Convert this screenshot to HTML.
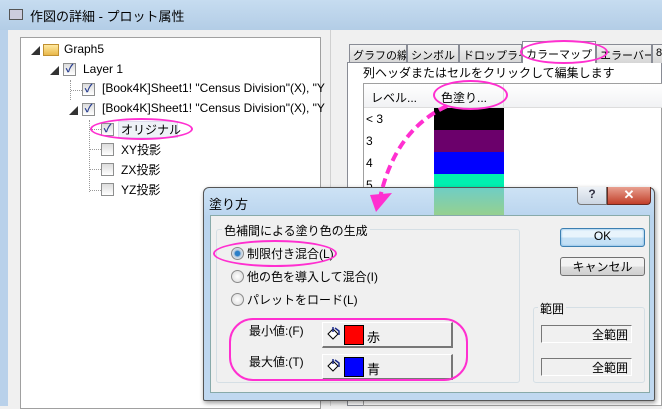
<!DOCTYPE html>
<html><head><meta charset="utf-8"><style>
*{box-sizing:border-box;margin:0;padding:0}
body{width:662px;height:406px;overflow:hidden;position:relative;background:#f0f0f0;font-family:"Liberation Sans","Noto Sans CJK JP",sans-serif;font-size:12px;color:#000}
.a{position:absolute}
.cb{position:absolute;width:13px;height:13px;border:1px solid #8e8f8f;background:linear-gradient(#dcdcdc,#fff)}
.ck{color:#2a3f8f;font-size:11px;line-height:11px;text-align:center;font-weight:bold}
.btn{position:absolute;border:1px solid #707070;border-radius:3px;background:linear-gradient(#f2f2f2 50%,#dddddd 50%,#cfcfcf);text-align:center}
.rad{position:absolute;width:13px;height:13px;border-radius:50%;border:1px solid #8a8a8a;background:radial-gradient(#fff,#d8d8d8)}
.pk{position:absolute;border:2px solid #ff2fd0;border-radius:50%}
.tab{position:absolute;top:44px;height:19px;border:1px solid #898c95;border-bottom:none;background:linear-gradient(#f2f2f2,#d6d6d6);padding:2px 3px;white-space:nowrap;font-size:11px;overflow:hidden}
</style></head><body>
<div class="a" style="left:0;top:0;width:662px;height:30px;background:linear-gradient(#c6dcf0,#b3cde6)"></div>
<div class="a" style="left:9px;top:9px;width:14px;height:11px;border:1px solid #555;background:#ccd"></div>
<div class="a" style="left:30px;top:6px;font-size:13px">作図の詳細 - プロット属性</div>
<div class="a" style="left:0;top:30px;width:8px;height:376px;background:#b9d1ea"></div>
<div class="a" style="left:8px;top:30px;width:654px;height:376px;background:#f0f0f0"></div>
<div class="a" style="left:20px;top:37px;width:301px;height:372px;background:#fff;border:1px solid #a0a0a0"></div>
<div class="a" style="left:31px;top:44px;font-size:9px;color:#333">◢</div>
<div class="a" style="left:43px;top:44px;width:16px;height:12px;background:linear-gradient(#ffe9a0,#e8b84a);border:1px solid #c09030"></div>
<div class="a" style="left:64px;top:42px">Graph5</div>
<div class="a" style="left:50px;top:64px;font-size:9px;color:#333">◢</div>
<div class="cb ck" style="left:63px;top:63px">✓</div>
<div class="a" style="left:83px;top:62px">Layer 1</div>
<div class="a" style="left:70px;top:80px;height:20px;border-left:1px dotted #999"></div>
<div class="a" style="left:71px;top:90px;width:11px;border-top:1px dotted #999"></div>
<div class="cb ck" style="left:82px;top:83px">✓</div>
<div class="a" style="left:102px;top:81px;white-space:nowrap">[Book4K]Sheet1! "Census Division"(X), "Y</div>
<div class="a" style="left:69px;top:104px;font-size:9px;color:#333">◢</div>
<div class="cb ck" style="left:82px;top:103px">✓</div>
<div class="a" style="left:102px;top:101px;white-space:nowrap">[Book4K]Sheet1! "Census Division"(X), "Y</div>
<div class="a" style="left:89px;top:120px;height:72px;border-left:1px dotted #999"></div>
<div class="a" style="left:90px;top:129px;width:11px;border-top:1px dotted #999"></div>
<div class="a" style="left:90px;top:149px;width:11px;border-top:1px dotted #999"></div>
<div class="a" style="left:90px;top:169px;width:11px;border-top:1px dotted #999"></div>
<div class="a" style="left:90px;top:190px;width:11px;border-top:1px dotted #999"></div>
<div class="cb ck" style="left:101px;top:123px">✓</div>
<div class="a" style="left:118px;top:121px;width:60px;height:17px;background:#eef2f7;border:1px solid #dde"></div>
<div class="a" style="left:121px;top:121px">オリジナル</div>
<div class="cb" style="left:101px;top:143px"></div><div class="a" style="left:121px;top:141px">XY投影</div>
<div class="cb" style="left:101px;top:163px"></div><div class="a" style="left:121px;top:161px">ZX投影</div>
<div class="cb" style="left:101px;top:183px"></div><div class="a" style="left:121px;top:181px">YZ投影</div>
<div class="pk" style="left:90px;top:118px;width:103px;height:22px"></div>
<div class="a" style="left:330px;top:30px;width:332px;height:376px;border-left:1px solid #d0d0d0"></div>
<div class="tab" style="left:349px;width:58px">グラフの線</div>
<div class="tab" style="left:407px;width:52px">シンボル</div>
<div class="tab" style="left:459px;width:63px">ドロップライン</div>
<div class="a" style="left:347px;top:62px;width:315px;height:344px;background:#fff;border:1px solid #898c95"></div>
<div class="tab" style="left:522px;top:41px;height:22px;width:74px;background:#fff;border-color:#898c95;padding-top:4px">カラーマップ</div>
<div class="tab" style="left:596px;width:56px">エラーバー</div>
<div class="tab" style="left:652px;width:12px">8</div>
<div class="a" style="left:363px;top:64px">列ヘッダまたはセルをクリックして編集します</div>
<div class="a" style="left:363px;top:83px;width:299px;height:323px;border:1px solid #a0a0a0;background:#fff"></div>
<div class="a" style="left:364px;top:84px;width:298px;height:24px;background:linear-gradient(#fff,#f1f2f4);border-bottom:1px solid #ddd"></div>
<div class="a" style="left:503px;top:84px;height:24px;border-left:1px solid #ddd"></div>
<div class="a" style="left:371px;top:89px">レベル...</div>
<div class="a" style="left:441px;top:89px">色塗り...</div>
<div class="a" style="left:434px;top:108px;width:70px;height:22px;background:#000"></div>
<div class="a" style="left:434px;top:130px;width:70px;height:22px;background:#6b006b"></div>
<div class="a" style="left:434px;top:152px;width:70px;height:22px;background:#0000ff"></div>
<div class="a" style="left:434px;top:174px;width:70px;height:22px;background:#00f0b0"></div>
<div class="a" style="left:366px;top:112px">&lt; 3</div>
<div class="a" style="left:366px;top:134px">3</div>
<div class="a" style="left:366px;top:156px">4</div>
<div class="a" style="left:366px;top:178px">5</div>
<div class="pk" style="left:520px;top:40px;width:88px;height:24px"></div>
<div class="pk" style="left:433px;top:80px;width:75px;height:30px"></div>
<div class="a" style="left:203px;top:187px;width:452px;height:214px;border:1px solid #555;border-radius:6px 6px 2px 2px;background:linear-gradient(#cde2f5,#b9d4ee 14%,#c0d8f0);box-shadow:1px 2px 5px rgba(0,0,0,.4)"></div>
<div class="a" style="left:434px;top:188px;width:70px;height:27px;background:linear-gradient(#58c8b8,#8ccf78);opacity:.8"></div>
<div class="a" style="left:209px;top:194px;font-size:13px">塗り方</div>
<div class="a" style="left:577px;top:187px;width:30px;height:18px;border:1px solid #777;border-top:none;border-radius:0 0 0 4px;background:linear-gradient(#eef2f7,#ccd6e2);text-align:center;font-weight:bold;color:#334;font-size:12px">?</div>
<div class="a" style="left:607px;top:187px;width:44px;height:18px;border:1px solid #6b2a20;border-top:none;border-radius:0 0 4px 0;background:linear-gradient(#e8a090,#c2402a);text-align:center;font-weight:bold;color:#fff;font-size:13px">✕</div>
<div class="a" style="left:210px;top:215px;width:440px;height:178px;background:#f0f0f0;border:1px solid #8aa"></div>
<div class="a" style="left:216px;top:229px;width:304px;height:154px;border:1px solid #d5dfe5;border-radius:3px"></div>
<div class="a" style="left:222px;top:222px;background:#f0f0f0;padding:0 2px">色補間による塗り色の生成</div>
<div class="rad" style="left:231px;top:247px;background:radial-gradient(#2b7fc8 30%,#bcd 45%,#fff)"></div>
<div class="a" style="left:247px;top:245px">制限付き混合(L)</div>
<div class="rad" style="left:231px;top:270px"></div><div class="a" style="left:247px;top:268px">他の色を導入して混合(I)</div>
<div class="rad" style="left:231px;top:293px"></div><div class="a" style="left:247px;top:291px">パレットをロード(L)</div>
<div class="a" style="left:249px;top:322px">最小値:(F)</div>
<div class="a" style="left:249px;top:353px">最大値:(T)</div>
<div class="btn" style="left:322px;top:322px;width:131px;height:26px;border-radius:0;background:#f0f0f0;border-color:#fff #777 #777 #fff;border-width:1px 2px 2px 1px"></div>
<div class="btn" style="left:322px;top:354px;width:131px;height:26px;border-radius:0;background:#f0f0f0;border-color:#fff #777 #777 #fff;border-width:1px 2px 2px 1px"></div>
<svg class="a" style="left:325px;top:326px" width="16" height="16"><path d="M3 8 L8 3 L13 8 L8 13 Z" fill="#fff" stroke="#000"/><path d="M8 1 L8 6 M10 2 L14 5 L14 9" fill="none" stroke="#1a2a8a" stroke-width="1.5"/></svg>
<svg class="a" style="left:325px;top:358px" width="16" height="16"><path d="M3 8 L8 3 L13 8 L8 13 Z" fill="#fff" stroke="#000"/><path d="M8 1 L8 6 M10 2 L14 5 L14 9" fill="none" stroke="#1a2a8a" stroke-width="1.5"/></svg>
<div class="a" style="left:344px;top:325px;width:20px;height:20px;background:#f00;border:1px solid #000"></div>
<div class="a" style="left:344px;top:357px;width:20px;height:20px;background:#00f;border:1px solid #000"></div>
<div class="a" style="left:367px;top:327px;font-size:13px">赤</div>
<div class="a" style="left:367px;top:359px;font-size:13px">青</div>
<div class="btn" style="left:560px;top:228px;width:85px;height:19px;border-color:#3c7fb1;box-shadow:0 0 2px #6ad inset;background:linear-gradient(#e8f4fc 50%,#c4e0f5 50%)">OK</div>
<div class="btn" style="left:560px;top:257px;width:85px;height:19px">キャンセル</div>
<div class="a" style="left:533px;top:307px;width:112px;height:76px;border:1px solid #d5dfe5;border-radius:3px"></div>
<div class="a" style="left:538px;top:300px;background:#f0f0f0;padding:0 2px">範囲</div>
<div class="a" style="left:541px;top:325px;width:91px;height:18px;border:1px solid;border-color:#777 #fff #fff #777;text-align:right;padding-right:3px">全範囲</div>
<div class="a" style="left:541px;top:358px;width:91px;height:18px;border:1px solid;border-color:#777 #fff #fff #777;text-align:right;padding-right:3px">全範囲</div>
<div class="pk" style="left:213px;top:240px;width:124px;height:27px"></div>
<div class="pk" style="left:229px;top:318px;width:239px;height:63px;border-radius:24px"></div>
<svg class="a" style="left:0;top:0" width="662" height="406"><path d="M447 106 Q395 130 380 198" fill="none" stroke="#ff2fd0" stroke-width="4" stroke-dasharray="9 5"/><polygon points="370,195 392,193 376,212" fill="#ff2fd0"/></svg>
</body></html>
